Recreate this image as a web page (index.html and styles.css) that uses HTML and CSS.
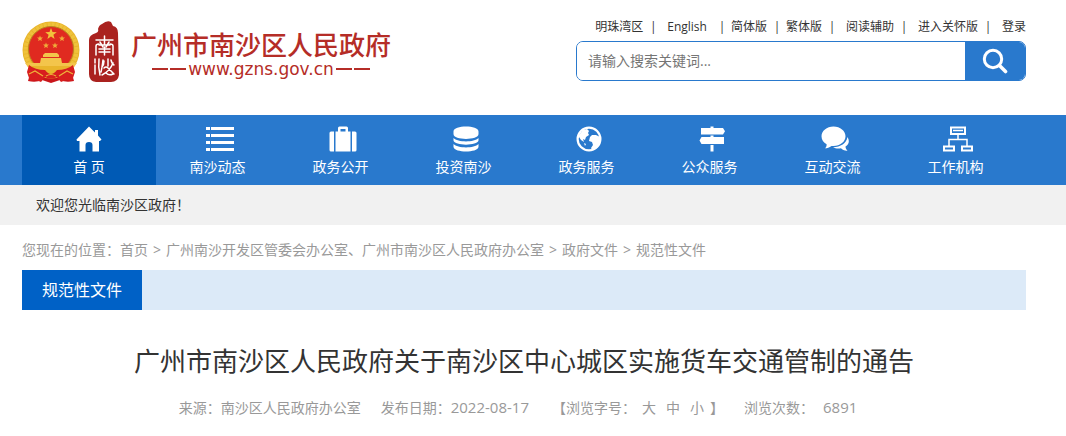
FILE: index.html
```html
<!DOCTYPE html>
<html lang="zh-CN">
<head>
<meta charset="utf-8">
<title>广州市南沙区人民政府</title>
<link rel="stylesheet" href="styles.css">
</head>
<body>
<header class="header wrap">
  <a class="brand" href="#">
    <svg class="emblem" viewBox="0 0 58 62" aria-hidden="true">
      <path d="M10 46 Q29 60 48 46 L52 60 Q44 62 38 59 L29 62 L20 59 Q14 62 6 60Z" fill="#c9151b"/>
      <circle cx="29" cy="29" r="28.5" fill="#e9b52c"/>
      <circle cx="29" cy="29" r="25.5" fill="none" stroke="#efc33c" stroke-width="4" stroke-dasharray="3 1"/>
      <circle cx="29" cy="28" r="22.5" fill="#e02a20" stroke="#b98420" stroke-width="1"/>
      <path d="M29 7l1.500 4 4.300.2-3.400 2.600 1.200 4.200-3.600-2.500-3.600 2.500 1.200-4.200-3.400-2.600 4.300-.2z" fill="#f2c23b"/>
      <g fill="#efac3a">
        <path id="s" d="M18 14.500l.8 2 2.200.1-1.700 1.400.6 2.100-1.900-1.200-1.900 1.200.6-2.100-1.700-1.400 2.200-.1z"/>
        <use href="#s" x="22"/><use href="#s" x="6" y="7"/><use href="#s" x="15" y="7"/>
      </g>
      <path d="M21 34l2-2h12l2 2v2H21zM19 37h20l1 5h15l-3 4H6l-3-4h15z" fill="#f3c54b"/>
      <path d="M9 45h40l-5 5q-15 6-30 0z" fill="#e9b52c"/>
      <path d="M7 44q6 5 16 5 3 4 6 4t6-4q10 0 16-5l2 7-3 9-6-1-5 2-4-5q-6 3-12 0l-4 5-5-2-6 1-3-9z" fill="#d81e1e"/>
      <path d="M7 53l6-3 8 5M51 53l-6-3-8 5M24 55q5-3 10 0" fill="none" stroke="#eeb33b" stroke-width="1.200"/>
    </svg>
    <svg class="seal" viewBox="0 0 30 62" aria-hidden="true">
      <path d="M13 3q5-4 9-2l2 4q5 1 5 7l1 42q-1 7-8 7H7q-7-1-7-8V19q0-5 7-7 3-1 2-4 1-4 4-5z" fill="#aa221f"/>
      <g fill="none" stroke="#fff" stroke-width="1.500" stroke-linecap="round">
        <path d="M7 19h17M15.500 15v9M10 24h11M7 34v-9q0-2 3-2M24 34v-9q0-2-3-2M11 21l3 5M20 21l-3 5M10 28h11M10 31h11M15.500 26v8"/>
        <path d="M6 38v4M6 44v9M10 38q-1 8 1 16M14 39q-1 8-2 12M19 38v7M15 40q0 4-2 6M22 39q1 4 3 5M24 42q-3 8-11 12M15 47q2-2 4 0l6 6M17 52q3 3 7 1"/>
      </g>
    </svg>
    <span class="brand-text">
      <span class="brand-name">广州市南沙区人民政府</span>
      <span class="brand-url"><i class="dash"></i><i class="dash"></i><span>www.gzns.gov.cn</span><i class="dash"></i><i class="dash"></i></span>
    </span>
  </a>
  <div class="tools">
    <nav class="quick">
      <a href="#">明珠湾区</a><span class="bar roomy">|</span><a href="#">English</a><span class="bar late">|</span><a href="#">简体版</a><span class="bar">|</span><a href="#">繁体版</a><span class="bar roomy">|</span><a href="#">阅读辅助</a><span class="bar roomy">|</span><a href="#">进入关怀版</a><span class="bar roomy">|</span><a href="#">登录</a>
    </nav>
    <form class="search">
      <input class="search-input" type="text" placeholder="请输入搜索关键词..." aria-label="搜索关键词">
      <button class="search-button" type="button" aria-label="搜索">
        <svg width="26" height="26" viewBox="0 0 26 26" fill="none" stroke="#fff"><circle cx="11" cy="11" r="8.700" stroke-width="3"/><path d="M17.500 17.500l6 6" stroke-width="3.600" stroke-linecap="round"/></svg>
      </button>
    </form>
  </div>
</header>

<nav class="main-nav">
  <div class="nav-list wrap">
    <a class="nav-item active" href="#">
      <svg width="26" height="26" viewBox="0 0 26 26"><path d="M13 .5l6 6V4h3v5.500l3.500 4-1.500 1.500h-1v10.500h-6.500V19q0-3-3.500-3T9.500 19v6.500H3.500V15H1l-.5-1.500z"/></svg>
      <span>首 页</span></a>
    <a class="nav-item" href="#">
      <svg width="28" height="26" viewBox="0 0 28 26"><path d="M0 1h4v3H0zM5 1h23v3H5zM0 8h4v3H0zM5 8h23v3H5zM0 15h4v3H0zM5 15h23v3H5zM0 22h4v3H0zM5 22h23v3H5z"/></svg>
      <span>南沙动态</span></a>
    <a class="nav-item" href="#">
      <svg width="28" height="26" viewBox="0 0 28 26"><path d="M2 5.500h3v20H2q-1.500 0-1.500-1.500V7Q.5 5.500 2 5.500zM6.500 5.500H9V2q0-1.500 1.500-1.500h7Q19 .5 19 2v3.500h2.500v20h-15zM11.500 3v2.500h5V3zM23 5.500h3q1.500 0 1.500 1.500v17q0 1.500-1.500 1.500h-3z" fill-rule="evenodd"/></svg>
      <span>政务公开</span></a>
    <a class="nav-item" href="#">
      <svg width="26" height="26" viewBox="0 0 26 26"><path d="M.5 5.500C.5-1.200 25.500-1.200 25.500 5.500V8c0 6.500-25 6.500-25 0zM.5 12c4 4.500 21 4.500 25 0v2.500c-1 5.500-24 5.500-25 0zM.5 18c4 4.500 21 4.500 25 0v3c-1 6-24 6-25 0z"/></svg>
      <span>投资南沙</span></a>
    <a class="nav-item" href="#">
      <svg width="26" height="26" viewBox="0 0 26 26"><circle cx="13" cy="13" r="11.400" fill="none" stroke="#fff" stroke-width="2.200"/><path d="M3 9l4-5 4-1 2 2-1 2 1 2-3 2-1 3-2-1 1 3-3-2-2-3zM14 11l2-2 4 0 4 2 0 5-4 7-4 1-1-2 2-3-1-3-3-1zM8 17l2 1-1 2z"/></svg>
      <span>政务服务</span></a>
    <a class="nav-item" href="#">
      <svg width="26" height="26" viewBox="0 0 26 26"><path d="M11.500.5h3V2H24l2 3.200-2 3.300H2V2h9.500zM11.500 9.500h3V11H25v7H2.500L.5 14.500l2-3.500h9zM11.500 19h3v6.500h-3z"/></svg>
      <span>公众服务</span></a>
    <a class="nav-item" href="#">
      <svg width="28" height="26" viewBox="0 0 28 26"><path d="M12.500.5c6.800 0 12 4.500 12 9.800S19.300 20 12.500 20l-2-.1C8.500 21.500 6 22.300 4 22.300c1.200-1 1.800-2.500 1.600-4C2.500 16.600.5 13.700.5 10.300.5 5 5.700.5 12.500.5z"/><path d="M26.500 11c2.500 4 1.300 7.500-2 9.500 0 1.800.8 3 2 4.300-3 .2-5-1-6.500-2.500-3 .5-5.800.2-8-1C19.500 21 25.500 17.500 26.500 11z"/></svg>
      <span>互动交流</span></a>
    <a class="nav-item" href="#">
      <svg width="30" height="26" viewBox="0 0 30 26" fill="none" stroke="#fff"><path d="M8 1.500h14v6.500H8zM1 20.500h10v4H1zM19 20.500h10v4H19z" stroke-width="2"/><path d="M10 4.500h10M15 8v5M6 20v-6.500h18V20" stroke-width="1.500"/></svg>
      <span>工作机构</span></a>
  </div>
</nav>
<div class="notice"><p class="notice-text wrap">欢迎您光临南沙区政府！</p></div>

<main class="wrap">
  <nav class="crumbs"><span>您现在的位置：</span><a href="#">首页</a><span class="arrow">&gt;</span><a href="#">广州南沙开发区管委会办公室、广州市南沙区人民政府办公室</a><span class="arrow">&gt;</span><a href="#">政府文件</a><span class="arrow">&gt;</span><a href="#">规范性文件</a></nav>
  <div class="section-bar"><h2 class="section-tab">规范性文件</h2></div>
  <h1 class="title">广州市南沙区人民政府关于南沙区中心城区实施货车交通管制的通告</h1>
  <div class="meta">
    <span>来源：南沙区人民政府办公室</span>
    <span>发布日期：<time class="date" datetime="2022-08-17">2022-08-17</time></span>
    <span class="sizes"><span>【浏览字号：</span><span class="size-links"><a href="#">大</a><a href="#">中</a><a href="#">小</a></span><span>】</span></span>
    <span class="views"><span>浏览次数：</span><span class="date">6891</span></span>
  </div>
</main>
</body>
</html>
```
FILE: styles.css
```css
* { box-sizing: border-box; }
body {
  margin: 0;
  background: #fff;
  color: #333;
  font: 14px/20px "Open Sans", "Noto Sans CJK SC", sans-serif;
}
a { color: inherit; text-decoration: none; }
h1, h2, p { margin: 0; font-weight: 400; }
.wrap { margin: 0 40px 0 22px; }

.header {
  display: flex;
  align-items: flex-start;
  justify-content: space-between;
  padding: 17px 0 32px;
}
.brand { display: flex; padding-top: 4px; color: #b52d27; }
.emblem { width: 58px; height: 62px; margin-right: 9px; }
.seal { width: 30px; height: 62px; margin-right: 12px; }
.brand-text { display: flex; flex-direction: column; padding-top: 10px; }
.brand-name { font-size: 26px; line-height: 28px; font-weight: 500; }
.brand-url {
  display: flex;
  align-items: center;
  justify-content: center;
  gap: 2px;
  font: 17px/20px "DejaVu Sans", sans-serif;
}
.dash { width: 16px; height: 2px; background: #b52d27; }

.tools { width: 450px; }
.quick {
  display: flex;
  justify-content: flex-end;
  margin-bottom: 4px;
  font-size: 12px;
  white-space: nowrap;
}
.bar { display: flex; justify-content: center; width: 4px; margin: 0 7px 0 8px; }
.roomy { margin-right: 12px; }
.late { margin-left: 13px; }
.search {
  display: flex;
  height: 40px;
  border: 1px solid #2979cd;
  border-radius: 7px;
  overflow: hidden;
}
.search-input {
  flex: 1;
  min-width: 0;
  padding: 0 11px;
  border: 0;
  outline: 0;
  background: #fff;
  font: inherit;
}
.search-input::placeholder { color: #757575; }
.search-button {
  display: flex;
  align-items: center;
  justify-content: center;
  width: 60px;
  padding: 0;
  border: 0;
  background: #2979cd;
}

.main-nav { background: #2979cd; }
.nav-list { display: flex; padding-right: 9px; }
.nav-item {
  flex: 1;
  display: flex;
  flex-direction: column;
  align-items: center;
  gap: 5px;
  padding: 11px 0 8px;
  color: #fff;
  fill: #fff;
}
.nav-item svg { margin-left: 4px; }
.nav-item.active { flex: 0 0 134px; background: #005ab5; }
.nav-item.active svg { margin-left: 0; }
.notice { display: flow-root; background: #f1f1f1; }
.notice-text { padding: 10px 14px; }

.crumbs { display: flex; padding: 15px 0 10px; color: #999; white-space: nowrap; }
.arrow { margin: 0 5px; }
.section-bar { display: flex; background: #dceaf8; }
.section-tab {
  width: 120px;
  background: #0061c6;
  color: #fff;
  font-size: 16px;
  line-height: 40px;
  text-align: center;
}
.title {
  padding: 31px 0 17px;
  font-size: 26px;
  line-height: 40px;
  text-align: center;
}
.meta {
  display: flex;
  align-items: baseline;
  justify-content: center;
  gap: 20px;
  padding-right: 12px;
  color: #999;
  white-space: nowrap;
}
.date { font-size: 15px; line-height: 18px; }
.sizes { display: flex; gap: 6px; margin-left: 3px; }
.size-links { display: flex; gap: 10px; }
.views { display: flex; align-items: baseline; gap: 9px; }
```
